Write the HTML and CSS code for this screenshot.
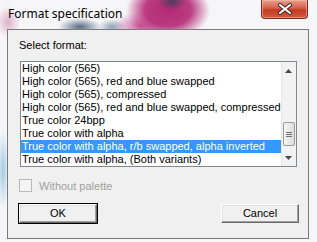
FILE: index.html
```html
<!DOCTYPE html>
<html lang="en">
<head>
    <meta charset="UTF-8">
    <title>Format specification</title>
    <link rel="stylesheet" href="styles.css">
</head>
<body>

    <!-- Window frame -->
    <div class="window">
        <div class="titlebar">
            <span class="title">Format specification</span>
            <div class="close-btn">
                <svg width="20" height="12" viewBox="0 0 20 12">
                    <path d="M5 2 L15 10 M15 2 L5 10" stroke="#3a1f1f" stroke-width="4" stroke-linecap="round"/>
                    <path d="M5 2 L15 10 M15 2 L5 10" stroke="#ffffff" stroke-width="2.2" stroke-linecap="round"/>
                </svg>
            </div>
        </div>

        <!-- Client area -->
        <div class="client">
            <div class="label">Select format:</div>

            <div class="listbox">
                <ul class="items">
                    <li>High color (565)</li>
                    <li>High color (565), red and blue swapped</li>
                    <li>High color (565), compressed</li>
                    <li>High color (565), red and blue swapped, compressed</li>
                    <li>True color 24bpp</li>
                    <li>True color with alpha</li>
                    <li class="selected">True color with alpha, r/b swapped, alpha inverted</li>
                    <li>True color with alpha, (Both variants)</li>
                </ul>
                <div class="scrollbar">
                    <div class="arrow">
                        <svg width="7" height="4" viewBox="0 0 7 4"><path d="M0 4 L3.5 0 L7 4 Z" fill="#4a4a4a"/></svg>
                    </div>
                    <div class="track">
                        <div class="thumb">
                            <span></span><span></span><span></span>
                        </div>
                    </div>
                    <div class="arrow">
                        <svg width="7" height="4" viewBox="0 0 7 4"><path d="M0 0 L7 0 L3.5 4 Z" fill="#4a4a4a"/></svg>
                    </div>
                </div>
            </div>

            <label class="check">
                <span class="box"></span>
                <span class="check-text">Without palette</span>
            </label>

            <div class="buttons">
                <div class="btn default">OK</div>
                <div class="btn">Cancel</div>
            </div>
        </div>
    </div>

</body>
</html>
```

FILE: styles.css
```css
/* Page */
html, body {
    margin: 0;
    padding: 0;
    width: 317px;
    height: 242px;
    overflow: hidden;
}

body {
    font-family: "Liberation Sans", Arial, sans-serif;
    font-size: 11px;
    color: #000;
    /* blurred aero glass behind the title bar */
    background:
        radial-gradient(ellipse 14px 8px at 172px 2px, rgba(50, 60, 90, 0.8), rgba(50, 60, 90, 0) 100%),
        radial-gradient(ellipse 42px 30px at 168px 10px, rgba(180, 40, 115, 1) 0%, rgba(180, 40, 115, 0.9) 55%, rgba(180, 40, 115, 0) 100%),
        radial-gradient(ellipse 26px 14px at 140px 26px, rgba(200, 60, 140, 0.8), rgba(200, 60, 140, 0) 100%),
        radial-gradient(ellipse 22px 9px at 80px 27px, rgba(40, 60, 90, 0.75), rgba(40, 60, 90, 0) 100%),
        radial-gradient(ellipse 14px 8px at 112px 27px, rgba(60, 90, 130, 0.55), rgba(60, 90, 130, 0) 100%),
        radial-gradient(ellipse 12px 16px at 8px 22px, rgba(200, 120, 160, 0.55), rgba(200, 120, 160, 0) 100%),
        radial-gradient(ellipse 6px 40px at 3px 170px, rgba(80, 160, 210, 0.5), rgba(80, 160, 210, 0) 100%),
        #f6f6f8;
}

/* Window */
.window {
    display: flex;
    flex-direction: column;
    height: 242px;
}

.titlebar {
    height: 29px;
    display: flex;
    align-items: flex-start;
    justify-content: space-between;
}

.title {
    font-family: "Noto Sans", "Open Sans", sans-serif;
    font-size: 12px;
    color: #000;
    margin: 5px 0 0 8px;
}

.close-btn {
    width: 45px;
    height: 18px;
    margin-right: 9px;
    border: 1px solid #7a2a22;
    border-top: none;
    border-radius: 0 0 4px 4px;
    background: linear-gradient(#e8a090 0%, #d6604a 45%, #c23a22 55%, #d45a3e 100%);
    box-shadow: inset 0 0 0 1px rgba(255, 200, 180, 0.5);
    display: flex;
    align-items: center;
    justify-content: center;
}

/* Client area */
.client {
    margin: 0 8px 3px 7px;
    height: 208px;
    border: 1px solid #7a7a7a;
    background: #f0f0f0;
    padding: 0 0 0 10px;
    display: flex;
    flex-direction: column;
}

.label {
    margin-top: 9px;
    padding-left: 1px;
    height: 14px;
}

.listbox {
    margin: 8px 0 0 2px;
    width: 275px;
    height: 104px;
    border: 1px solid #828790;
    background: #fff;
    display: flex;
}

.items {
    list-style: none;
    margin: 0;
    padding: 0;
    flex: 1;
}

.items li {
    height: 13px;
    line-height: 13px;
    padding-left: 1px;
    white-space: nowrap;
    overflow: hidden;
}

.items li.selected {
    background: #3399ff;
    color: #fff;
}

/* Scrollbar */
.scrollbar {
    width: 17px;
    background: #f2f2f2;
    border-left: 1px solid #e6e6e6;
    display: flex;
    flex-direction: column;
}

.arrow {
    height: 17px;
    display: flex;
    align-items: center;
    justify-content: center;
}

.track {
    flex: 1;
    display: flex;
    flex-direction: column;
    justify-content: flex-end;
    padding-bottom: 3px;
}

.thumb {
    height: 22px;
    margin: 0 1px;
    border: 1px solid #9a9a9a;
    border-radius: 2px;
    background: linear-gradient(to right, #f4f4f4, #dedede);
    display: flex;
    flex-direction: column;
    align-items: center;
    justify-content: center;
    gap: 1px;
}

.thumb span {
    width: 6px;
    height: 1px;
    background: #707070;
}

/* Checkbox */
.check {
    display: flex;
    align-items: center;
    margin: 12px 0 0 1px;
    color: #a0a0a0;
}

.box {
    width: 11px;
    height: 11px;
    border: 1px solid #b8b8b8;
    background: #f4f4f4;
    margin-right: 7px;
}

/* Buttons */
.buttons {
    display: flex;
    justify-content: space-between;
    width: 280px;
    margin: 12px 0 0 1px;
}

.btn {
    width: 76px;
    height: 17px;
    line-height: 17px;
    text-align: center;
    background: #f0f0f0;
    border: 1px solid;
    border-color: #ffffff #696969 #696969 #ffffff;
    box-shadow: inset -1px -1px 0 #a0a0a0, inset 1px 1px 0 #e3e3e3;
}

.btn.default {
    outline: 1px solid #000;
    outline-offset: 0;
}
```
